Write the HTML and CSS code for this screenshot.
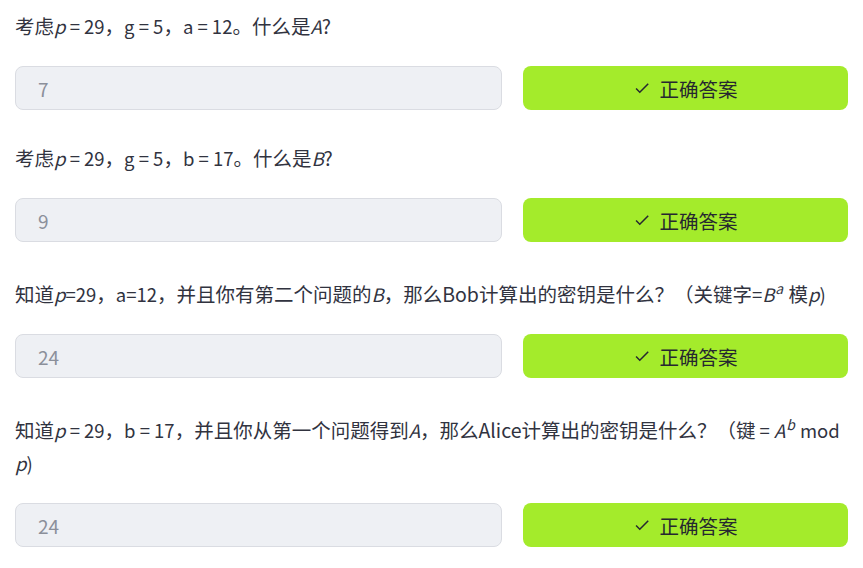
FILE: index.html
```html
<!DOCTYPE html>
<html lang="zh">
<head>
<meta charset="utf-8">
<link rel="stylesheet" href="styles.css">
</head>
<body>
<main class="page">
  <section class="block">
    <p class="q">考虑<span class="m"><i>p</i> = 29</span>，<span class="m">g = 5</span>，<span class="m">a = 12</span>。什么是<span class="m"><i>A</i></span>?</p>
    <div class="row">
      <div class="field">7</div>
      <button class="btn"><svg class="chk" viewBox="0 0 24 24"><path d="M9 16.17L4.83 12l-1.42 1.41L9 19 21 7l-1.41-1.41z"/></svg>正确答案</button>
    </div>
  </section>
  <section class="block">
    <p class="q">考虑<span class="m"><i>p</i> = 29</span>，<span class="m">g = 5</span>，<span class="m">b = 17</span>。什么是<span class="m"><i>B</i></span>?</p>
    <div class="row">
      <div class="field">9</div>
      <button class="btn"><svg class="chk" viewBox="0 0 24 24"><path d="M9 16.17L4.83 12l-1.42 1.41L9 19 21 7l-1.41-1.41z"/></svg>正确答案</button>
    </div>
  </section>
  <section class="block">
    <p class="q tall">知道<span class="m"><i>p</i>=29</span>，<span class="m">a=12</span>，并且你有第二个问题的<span class="m"><i>B</i></span>，那么Bob计算出的密钥是什么？（关键字<span class="m">=<i>B</i><sup><i>a</i></sup></span> 模<span class="m"><i>p</i>)</span></p>
    <div class="row">
      <div class="field">24</div>
      <button class="btn"><svg class="chk" viewBox="0 0 24 24"><path d="M9 16.17L4.83 12l-1.42 1.41L9 19 21 7l-1.41-1.41z"/></svg>正确答案</button>
    </div>
  </section>
  <section class="block">
    <p class="q tall">知道<span class="m"><i>p</i> = 29</span>，<span class="m">b = 17</span>，并且你从第一个问题得到<span class="m"><i>A</i></span>，那么Alice计算出的密钥是什么？（键<span class="m"> = <i>A</i><sup><i>b</i></sup> mod</span> <span class="m"><i>p</i>)</span></p>
    <div class="row">
      <div class="field">24</div>
      <button class="btn"><svg class="chk" viewBox="0 0 24 24"><path d="M9 16.17L4.83 12l-1.42 1.41L9 19 21 7l-1.41-1.41z"/></svg>正确答案</button>
    </div>
  </section>
</main>
</body>
</html>
```
FILE: styles.css
```css
html, body {
  margin: 0;
  padding: 0;
  background: #ffffff;
}
.page {
  padding: 9px 15px 0 15px;
  font-family: "Noto Sans CJK SC", "Noto Sans", sans-serif;
  color: #31333f;
  font-size: 19.5px;
}
.block {
  margin-bottom: 31px;
}
.q {
  margin: 0 0 24px 0;
  line-height: 33px;
}
.q.tall {
  padding-top: 4px;
}
.m {
  font-size: 18.5px;
  line-height: 1;
}
.q i {
  font-style: italic;
}
.q sup {
  font-size: 0.75em;
  line-height: 0;
  vertical-align: 0.6em;
  padding: 0 1px;
}
.row {
  display: grid;
  grid-template-columns: 487fr 325fr;
  column-gap: 21px;
}
.field {
  height: 44px;
  box-sizing: border-box;
  border: 1px solid #dadce2;
  background: #eef0f4;
  border-radius: 8px;
  color: #8b8f9a;
  padding: 0 22px;
  display: flex;
  align-items: center;
  font-size: 19px;
}
.btn {
  height: 44px;
  border: none;
  border-radius: 8px;
  background: #a4eb2b;
  color: #262730;
  font-family: inherit;
  font-size: 19.5px;
  display: flex;
  align-items: center;
  justify-content: center;
  gap: 8px;
  padding: 0;
}
.chk {
  width: 18px;
  height: 18px;
  fill: #262730;
}
```
